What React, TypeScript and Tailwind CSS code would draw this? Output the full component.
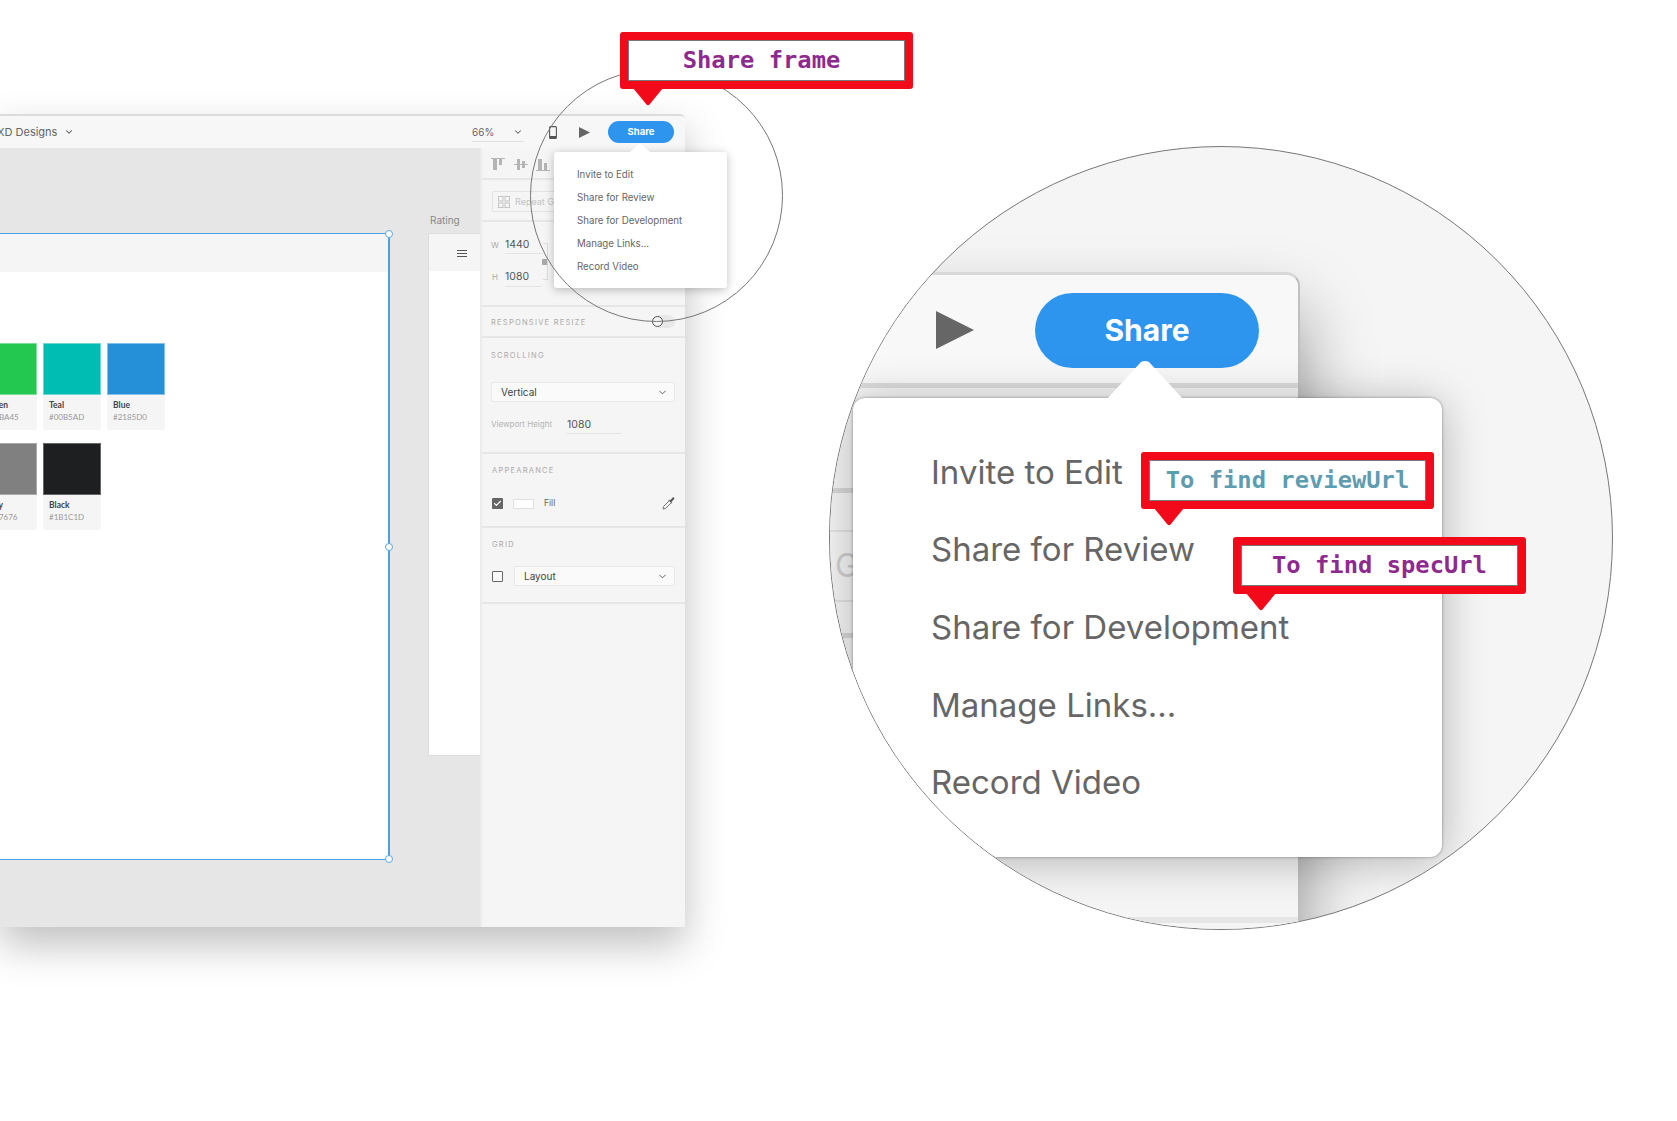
import { ChevronDown, Check } from "lucide-react";

const menuItems = ["Invite to Edit", "Share for Review", "Share for Development", "Manage Links...", "Record Video"];

function Swatch({ name, hex, color, border }: { name: string; hex: string; color: string; border: string }) {
  return (
    <div className="w-[58px] h-[87px] rounded-[2px] bg-[#f5f5f5] font-['Lato',sans-serif]">
      <div className={`h-[52px] border ${color} ${border}`} />
      <div className="pl-[6px] pt-[4px] text-[8.5px] leading-[12px] font-bold text-[#444]">{name}</div>
      <div className="pl-[6px] text-[8px] leading-[12px] text-[#999]">{hex}</div>
    </div>
  );
}

function Handle({ className }: { className: string }) {
  return <div className={`absolute -right-[5px] w-[8px] h-[8px] rounded-full bg-white border border-[#58a9e6] ${className}`} />;
}

function SectionLabel({ children }: { children: string }) {
  return <div className="text-[7.5px] leading-[10px] tracking-[1.25px] text-[#aaa]">{children}</div>;
}

function Callout({ text, color, className, pad }: { text: string; color: string; className: string; pad?: string }) {
  return (
    <div className={`absolute z-30 ${className}`}>
      <div className={`w-[293px] h-[57px] rounded-[3px] border-[8px] border-[#f30a1a] bg-white flex items-center justify-center shadow-[inset_0_0_0_1px_#777] font-['DejaVu_Sans_Mono',monospace] font-bold text-[23.8px] ${pad ?? ""} ${color}`}>
        {text}
      </div>
      <svg className="absolute left-[13px] top-[56px]" width="30" height="18" viewBox="0 0 30 18">
        <path d="M0 0H30L16.5 16.5Q15 18 13.5 16.5Z" fill="#f30a1a" />
      </svg>
    </div>
  );
}

function SmallPanel() {
  return (
    <div className="w-[205px] h-full shrink-0 flex flex-col bg-[#f5f5f5] border-l-2 border-[#ececec]">
      <div className="h-[32px] shrink-0 border-b-2 border-[#e6e6e6] flex items-center pl-[9px] pt-[3px] gap-[8px]">
        <svg width="15" height="13" viewBox="0 0 15 13" fill="#b4b4b4"><rect x="0" y="0" width="14" height="1" /><rect x="2" y="1" width="4" height="11" /><rect x="8" y="1" width="3" height="6" /></svg>
        <svg width="14" height="11" viewBox="0 0 14 11" fill="#b4b4b4"><rect x="0" y="5" width="14" height="1" /><rect x="3" y="0" width="3" height="11" /><rect x="8" y="2" width="3" height="7" /></svg>
        <svg width="14" height="13" viewBox="0 0 14 13" fill="#b4b4b4"><rect x="0" y="12" width="14" height="1" /><rect x="2" y="1" width="4" height="11" /><rect x="8" y="5" width="3" height="7" /></svg>
      </div>
      <div className="h-[42px] shrink-0 border-b-2 border-[#e6e6e6] pl-[10px] pt-[11px]">
        <div className="w-[140px] h-[21px] rounded-[2px] border border-[#e2e2e2] flex items-center pl-[5px] gap-[5px] text-[9px] text-[#c4c4c4]">
          <svg width="12" height="12" viewBox="0 0 12 12" fill="none" stroke="#c4c4c4"><rect x="0.5" y="0.5" width="4.5" height="4.5" /><rect x="7" y="0.5" width="4.5" height="4.5" /><rect x="0.5" y="7" width="4.5" height="4.5" /><rect x="7" y="7" width="4.5" height="4.5" /></svg>
          Repeat Grid
        </div>
      </div>
      <div className="h-[85px] shrink-0 border-b-2 border-[#e6e6e6] pl-[9px] pt-[13px] text-[10.5px] text-[#555] relative">
        <div className="flex items-start h-[20px]"><span className="w-[14px] text-[8px] leading-[20px] text-[#aaa]">W</span><span className="w-[37px] h-[19px] leading-[19px] border-b border-[#e4e4e4]">1440</span></div>
        <div className="flex items-start h-[20px] mt-[12px]"><span className="w-[14px] text-[8px] leading-[20px] text-[#aaa] pl-[1px]">H</span><span className="w-[37px] h-[20px] leading-[20px] border-b border-[#e4e4e4]">1080</span></div>
        <div className="absolute left-[61px] top-[21px] w-[5px] h-[37px] border border-l-0 border-[#ddd]">
          <div className="absolute left-[-1px] top-[15px] w-[5px] h-[6px] bg-[#aaa]" />
        </div>
      </div>
      <div className="h-[31px] shrink-0 border-b-2 border-[#e6e6e6] pl-[9px] pr-[10px] flex items-center justify-between">
        <div className="pt-[2px]"><SectionLabel>RESPONSIVE RESIZE</SectionLabel></div>
        <div className="w-[23px] h-[13px] rounded-full bg-[#e8e8e8] relative">
          <div className="absolute left-0 top-[1px] w-[11px] h-[11px] rounded-full bg-[#f5f5f5] border border-[#555]" />
        </div>
      </div>
      <div className="h-[116px] shrink-0 border-b-2 border-[#e6e6e6] pl-[9px] pr-[10px] pt-[13px]">
        <SectionLabel>SCROLLING</SectionLabel>
        <div className="mt-[21px] h-[20px] rounded-[2px] border border-[#e8e8e8] bg-[#fafafa] flex items-center justify-between pl-[9px] pr-[6px] text-[10px] text-[#444]">
          Vertical <ChevronDown size={11} color="#555" />
        </div>
        <div className="mt-[12px] flex items-start">
          <span className="w-[76px] text-[8px] leading-[20px] text-[#b4b4b4]">Viewport Height</span>
          <span className="w-[54px] h-[20px] leading-[21px] text-[10.5px] text-[#555] border-b border-[#e4e4e4]">1080</span>
        </div>
      </div>
      <div className="h-[74px] shrink-0 border-b-2 border-[#e6e6e6] pl-[10px] pr-[10px] pt-[12px]">
        <SectionLabel>APPEARANCE</SectionLabel>
        <div className="mt-[21px] flex items-center">
          <div className="w-[11px] h-[11px] rounded-[1px] bg-[#666] flex items-center justify-center"><Check size={9} color="#fff" strokeWidth={3} /></div>
          <div className="ml-[10px] w-[21px] h-[10px] bg-white border border-[#e0e0e0]" />
          <span className="ml-[10px] text-[8.5px] text-[#666]">Fill</span>
          <svg className="ml-auto" width="13" height="13" viewBox="0 0 13 13" fill="none">
            <path d="M7.2 3.8L1.6 9.4L1 12L3.6 11.4L9.2 5.8" stroke="#777" strokeWidth="1" />
            <path d="M6.4 3.2L9.8 6.6L10.4 6L9.4 4.9L12 2.3Q13 1 11.8 0.4Q11 0 10.2 1L8 3.6L7 2.6Z" fill="#555" />
          </svg>
        </div>
      </div>
      <div className="h-[76px] shrink-0 border-b-2 border-[#e6e6e6] pl-[10px] pr-[10px] pt-[12px]">
        <SectionLabel>GRID</SectionLabel>
        <div className="mt-[16px] flex items-center">
          <div className="w-[11px] h-[11px] rounded-[1px] border border-[#666] bg-[#fafafa]" />
          <div className="ml-[11px] flex-1 h-[20px] rounded-[2px] border border-[#e8e8e8] bg-[#fafafa] flex items-center justify-between pl-[9px] pr-[6px] text-[10px] text-[#444]">
            Layout <ChevronDown size={11} color="#555" />
          </div>
        </div>
      </div>
    </div>
  );
}

export default function App() {
  return (
    <div className="relative w-[1677px] h-[1121px] overflow-hidden bg-white font-['Inter',sans-serif]">
      <div className="pt-[114px]">
        <div className="relative w-[685px] h-[813px] flex flex-col rounded-tr-[5px] border-t-2 border-[#dcdcdc] shadow-[0_18px_40px_rgba(0,0,0,0.25)]">
          <div className="h-[32px] shrink-0 flex items-center bg-[#f7f7f7] rounded-tr-[5px] pr-[11px]">
            <span className="-ml-[3px] text-[11px] text-[#666]">XD Designs</span>
            <ChevronDown className="ml-[7px]" size={10} color="#555" strokeWidth={2.5} />
            <div className="ml-auto w-[52px] h-[19px] mt-[1px] flex items-center justify-between border-b border-[#e2e2e2] pr-[1px] text-[10px] text-[#666]">
              66% <ChevronDown size={10} color="#666" strokeWidth={2.5} />
            </div>
            <svg className="ml-[25px]" width="8" height="13" viewBox="0 0 8 13" fill="none"><rect x="0.6" y="0.6" width="6.8" height="11.8" rx="1" stroke="#555" strokeWidth="1.1" /><rect x="1" y="10" width="6" height="2.5" fill="#555" /></svg>
            <svg className="ml-[22px]" width="11" height="11" viewBox="0 0 11 11"><path d="M0 0L11 5.5L0 11Z" fill="#666" /></svg>
            <div className="ml-[18px] w-[66px] h-[22px] rounded-full bg-[#2e95ef] flex items-center justify-center text-[9.5px] font-bold text-white">Share</div>
          </div>
          <div className="flex flex-1 min-h-0">
            <div className="w-[480px] h-full shrink-0 bg-[#e6e6e6] overflow-hidden pt-[85px] flex items-start">
              <div className="relative -ml-[23px] w-[413px] h-[627px] shrink-0 bg-white border border-r-2 border-[#4aa0e2]">
                <div className="h-[38px] bg-[#f5f5f5]" />
                <div className="ml-[1px] mt-[71px] grid grid-cols-[58px_58px_58px] gap-x-[6px] gap-y-[13px]">
                  <Swatch name="Green" hex="#21BA45" color="bg-[#22c850]" border="border-[#7fdd95]" />
                  <Swatch name="Teal" hex="#00B5AD" color="bg-[#00bdb3]" border="border-[#6fd8d2]" />
                  <Swatch name="Blue" hex="#2185D0" color="bg-[#2590d8]" border="border-[#86bfe8]" />
                  <Swatch name="Gray" hex="#767676" color="bg-[#808080]" border="border-[#aaaaaa]" />
                  <Swatch name="Black" hex="#1B1C1D" color="bg-[#1e1f21]" border="border-[#666666]" />
                </div>
                <Handle className="-top-[4px]" />
                <Handle className="top-[309px]" />
                <Handle className="-bottom-[4px]" />
              </div>
              <div className="relative ml-[38px] w-[60px] h-[523px] shrink-0 bg-white border border-[#dddddd]">
                <span className="absolute left-[1px] -top-[21px] text-[10px] leading-[14px] text-[#888]">Rating</span>
                <div className="h-[37px] bg-[#f5f5f5] flex flex-col gap-[2px] pl-[28px] pt-[16px]">
                  <div className="w-[10px] h-[1px] bg-[#555]" />
                  <div className="w-[10px] h-[1px] bg-[#555]" />
                  <div className="w-[10px] h-[1px] bg-[#555]" />
                </div>
              </div>
            </div>
            <SmallPanel />
          </div>
        </div>
      </div>

      {/* small share menu */}
      <div className="absolute z-10 left-[554px] top-[152px] w-[173px] h-[136px] rounded-[3px] bg-white shadow-[0_2px_10px_rgba(0,0,0,0.25)] pt-[10.5px] pl-[23px]">
        <svg className="absolute left-[75px] -top-[9px]" width="22" height="10" viewBox="0 0 22 10"><path d="M0 10L11 0L22 10Z" fill="#fff" /></svg>
        {menuItems.map((m) => (
          <div key={m} className="h-[23px] leading-[23px] text-[9.7px] text-[#666]">{m}</div>
        ))}
      </div>

      {/* small magnifier ring */}
      <div className="absolute z-20 left-[530px] top-[69px] w-[253px] h-[253px] rounded-full border border-[#777]" />

      {/* big magnifier */}
      <div className="absolute z-20 left-[829px] top-[146px] w-[784px] h-[784px] rounded-full border border-[#777] bg-[#f5f5f5] overflow-hidden">
        <div className="absolute -left-[1px] top-[125px] w-[471px] h-[700px] rounded-tr-[14px] bg-[#f5f5f5] shadow-[0_40px_70px_rgba(0,0,0,0.42)] border-t-[3px] border-r-[2px] border-t-[#d8d8d8] border-r-[#c0c0c0]">
          <div className="h-[113px] bg-[#f8f8f8] rounded-tr-[12px] border-b-[5px] border-[#dcdcdc] flex items-start">
            <svg className="ml-[107px] mt-[36px]" width="38" height="38" viewBox="0 0 38 38"><path d="M0 0L38 19L0 38Z" fill="#666" /></svg>
            <div className="ml-[61px] mt-[18px] w-[224px] h-[75px] rounded-full bg-[#2e95ef] flex items-center justify-center text-[30px] font-bold text-white">Share</div>
          </div>
          <div className="h-[105px] border-b-[5px] border-[#d8d8d8]" />
          <div className="mt-[37px] h-[72px] border-y-[2px] border-[#e2e2e2] text-[32px] leading-[68px] text-[#d0d0d0] pl-[6px]">G</div>
          <div className="h-[36px] border-b-[5px] border-[#d8d8d8]" />
          <div className="h-[285px] border-b-[6px] border-[#e6e6e6]" />
        </div>
        <div className="absolute left-[23px] top-[251px] w-[589px] h-[459px] rounded-[12px] bg-white shadow-[0_0_3px_rgba(0,0,0,0.4),0_4px_45px_rgba(0,0,0,0.28)] pl-[78px] pt-[35.5px]">
          <svg className="absolute left-[254px] -top-[37px]" width="76" height="38" viewBox="0 0 76 38"><path d="M0 38L34 1Q38 -1 42 1L76 38Z" fill="#fff" /></svg>
          {menuItems.map((m) => (
            <div key={m} className="h-[77.7px] leading-[77.7px] text-[33px] text-[#666]">{m}</div>
          ))}
        </div>
      </div>

      <Callout text="Share frame" color="text-[#8e2a8e]" pad="pr-[10px]" className="left-[620px] top-[32px]" />
      <Callout text="To find reviewUrl" color="text-[#5f9cb0]" className="left-[1141px] top-[452px]" />
      <Callout text="To find specUrl" color="text-[#8e2a8e]" className="left-[1233px] top-[537px]" />
    </div>
  );
}
